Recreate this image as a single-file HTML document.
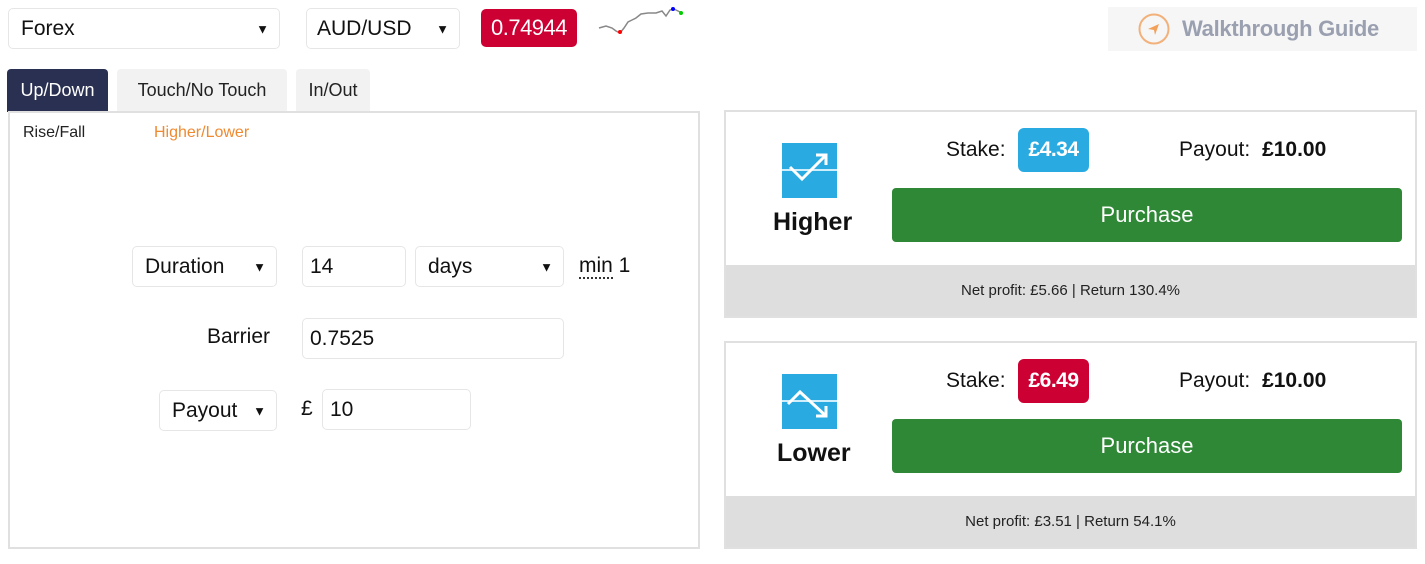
<!DOCTYPE html>
<html><head><style>
*{box-sizing:border-box;margin:0;padding:0}
body{width:1425px;height:564px;background:#fff;font-family:"Liberation Sans",sans-serif;color:#111;position:relative;overflow:hidden}
.a{position:absolute}
.sel,.inp{position:absolute;border:1px solid #e6e6e6;border-radius:5px;background:#fff;font-size:21px;padding-left:12px;display:flex;align-items:center}
.sel:after{content:"▼";position:absolute;right:10px;font-size:13px;top:50%;transform:translateY(-50%)}
.tab{position:absolute;top:69px;height:43px;font-size:18px;display:flex;align-items:center;justify-content:center;background:#f2f2f2;color:#222;border-radius:4px 4px 0 0}
.card{position:absolute;left:724px;width:693px;height:208px;border:2px solid #e0e0e0;background:#fff;overflow:hidden}
.foot{position:absolute;left:0;right:0;bottom:0;height:51px;background:#dedede;font-size:15px;display:flex;align-items:center;justify-content:center;color:#222}
.btn{position:absolute;left:166px;width:510px;height:54px;background:#2e8836;border-radius:4px;color:#fff;font-size:22px;display:flex;align-items:center;justify-content:center}
.lbl{position:absolute;font-size:21px}
.badge{position:absolute;height:44px;border-radius:6px;color:#fff;font-weight:bold;font-size:21px;display:flex;align-items:center;justify-content:center;letter-spacing:-0.5px}
</style></head><body>
<div class="sel" style="left:8px;top:8px;width:272px;height:41px">Forex</div>
<div class="sel" style="left:306px;top:8px;width:154px;height:41px;padding-left:10px">AUD/USD</div>
<div class="a" style="left:481px;top:9px;width:96px;height:38px;background:#cc0033;border-radius:5px;color:#fff;font-size:22px;display:flex;align-items:center;justify-content:center;letter-spacing:-0.5px">0.74944</div>
<svg class="a" style="left:596px;top:6px" width="90" height="30"><polyline points="3,22 10,20 16,22 20,25 24,27 28,22 32,16 36,14 40,12 45,8 52,7 60,7 66,5 70,10 74,4 78,3 84,6" fill="none" stroke="#888" stroke-width="1.5"/><circle cx="24" cy="26" r="2" fill="red"/><circle cx="77" cy="3" r="2" fill="blue"/><circle cx="85" cy="7" r="2" fill="#0c0"/></svg>
<div class="a" style="left:1108px;top:7px;width:309px;height:44px;background:#f6f6f7;display:flex;align-items:center"><svg style="margin-left:30px" width="32" height="32"><circle cx="16" cy="16" r="14.5" fill="none" stroke="#f2b17a" stroke-width="2"/><path d="M10 16 L21 11 L17 22 L16 17 Z" fill="#f2a05a"/></svg><span style="margin-left:12px;font-size:22px;font-weight:bold;color:#9aa0b0;letter-spacing:-0.3px">Walkthrough Guide</span></div>
<div class="tab" style="left:7px;width:101px;background:#2a3052;color:#fff">Up/Down</div>
<div class="tab" style="left:117px;width:170px">Touch/No Touch</div>
<div class="tab" style="left:296px;width:74px">In/Out</div>
<div class="a" style="left:8px;top:111px;width:692px;height:438px;border:2px solid #e0e0e0"></div>
<div class="a" style="left:23px;top:124px;font-size:16px;color:#222">Rise/Fall</div>
<div class="a" style="left:154px;top:124px;font-size:16px;color:#f08a30">Higher/Lower</div>
<div class="sel" style="left:132px;top:246px;width:145px;height:41px">Duration</div>
<div class="inp" style="left:302px;top:246px;width:104px;height:41px;padding-left:7px">14</div>
<div class="sel" style="left:415px;top:246px;width:149px;height:41px">days</div>
<div class="lbl" style="left:579px;top:254px"><span style="border-bottom:2px dotted #333">min</span> 1</div>
<div class="lbl" style="left:207px;top:325px">Barrier</div>
<div class="inp" style="left:302px;top:318px;width:262px;height:41px;padding-left:7px">0.7525</div>
<div class="sel" style="left:159px;top:390px;width:118px;height:41px">Payout</div>
<div class="lbl" style="left:301px;top:397px">£</div>
<div class="inp" style="left:322px;top:389px;width:149px;height:41px;padding-left:7px">10</div>

<div class="card" style="top:110px">
<svg class="a" style="left:56px;top:31px" width="55" height="55"><rect width="55" height="55" fill="#29abe2"/><line x1="0" y1="27" x2="55" y2="27" stroke="#cdeefa" stroke-width="2"/><polyline points="8,24 20,36 44,12" fill="none" stroke="#fff" stroke-width="3"/><polyline points="34,12 44,12 44,22" fill="none" stroke="#fff" stroke-width="3"/></svg>
<div class="a" style="left:47px;top:96px;font-size:25px;font-weight:bold">Higher</div>
<div class="lbl" style="left:220px;top:26px">Stake:</div>
<div class="badge" style="left:292px;top:16px;width:71px;background:#29abe2">£4.34</div>
<div class="lbl" style="left:453px;top:26px">Payout: <b style="margin-left:6px">£10.00</b></div>
<div class="btn" style="top:76px">Purchase</div>
<div class="foot">Net profit: £5.66 | Return 130.4%</div>
</div>
<div class="card" style="top:341px">
<svg class="a" style="left:56px;top:31px" width="55" height="55"><rect width="55" height="55" fill="#29abe2"/><line x1="0" y1="27" x2="55" y2="27" stroke="#cdeefa" stroke-width="2"/><polyline points="6,30 18,18 44,42" fill="none" stroke="#fff" stroke-width="3"/><polyline points="34,42 44,42 44,32" fill="none" stroke="#fff" stroke-width="3"/></svg>
<div class="a" style="left:51px;top:96px;font-size:25px;font-weight:bold">Lower</div>
<div class="lbl" style="left:220px;top:26px">Stake:</div>
<div class="badge" style="left:292px;top:16px;width:71px;background:#cc0033">£6.49</div>
<div class="lbl" style="left:453px;top:26px">Payout: <b style="margin-left:6px">£10.00</b></div>
<div class="btn" style="top:76px">Purchase</div>
<div class="foot">Net profit: £3.51 | Return 54.1%</div>
</div>
</body></html>
